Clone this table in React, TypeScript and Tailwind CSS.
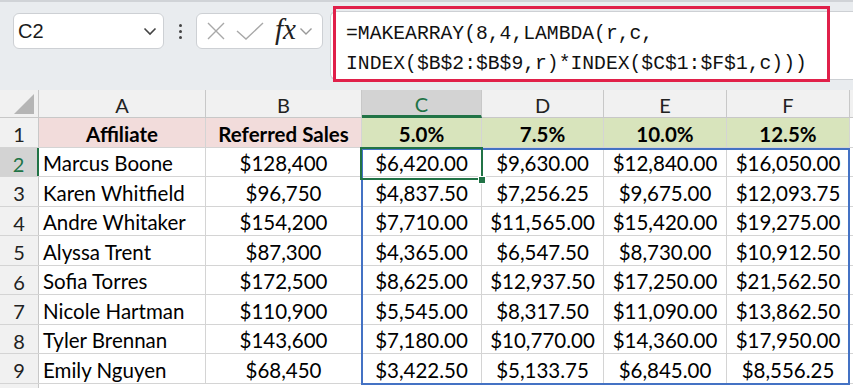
import React from "react";

const cols = [
  { key: "A", w: "w-[167px]" },
  { key: "B", w: "w-[156px]" },
  { key: "C", w: "w-[120px]" },
  { key: "D", w: "w-[122px]" },
  { key: "E", w: "w-[123px]" },
  { key: "F", w: "w-[123px]" },
];

const rows: string[][] = [
  ["Marcus Boone", "$128,400", "$6,420.00", "$9,630.00", "$12,840.00", "$16,050.00"],
  ["Karen Whitfield", "$96,750", "$4,837.50", "$7,256.25", "$9,675.00", "$12,093.75"],
  ["Andre Whitaker", "$154,200", "$7,710.00", "$11,565.00", "$15,420.00", "$19,275.00"],
  ["Alyssa Trent", "$87,300", "$4,365.00", "$6,547.50", "$8,730.00", "$10,912.50"],
  ["Sofia Torres", "$172,500", "$8,625.00", "$12,937.50", "$17,250.00", "$21,562.50"],
  ["Nicole Hartman", "$110,900", "$5,545.00", "$8,317.50", "$11,090.00", "$13,862.50"],
  ["Tyler Brennan", "$143,600", "$7,180.00", "$10,770.00", "$14,360.00", "$17,950.00"],
  ["Emily Nguyen", "$68,450", "$3,422.50", "$5,133.75", "$6,845.00", "$8,556.25"],
];

const rowHeights = ["h-[29px]", "h-[30px]", "h-[29px]", "h-[30px]", "h-[29px]", "h-[30px]", "h-[29px]", "h-[30px]"];

const cellBase = "border-r border-[#d4d4d4] flex items-center pt-[3px] text-[20.5px] whitespace-nowrap";

export default function App() {
  return (
    <div className="w-[853px] h-[388px] overflow-hidden bg-white relative font-['Lato',sans-serif] text-black">
      {/* Top formula area */}
      <div className="h-[90px] bg-[#e9ecef] relative border-t-[2px] border-[#d0d3d7] flex items-start pl-[13px] pt-[11px]">
        {/* Name box */}
        <div className="w-[151px] h-[36px] rounded-[6px] border border-[#cdd0d4] bg-white flex items-center justify-between pl-[4px] pr-[6px]">
          <span className="font-['Liberation_Sans',sans-serif] text-[20px] text-[#1a1a1a]">C2</span>
          <svg width="14" height="9" viewBox="0 0 14 9" fill="none">
            <path d="M1.5 1.5 L7 7 L12.5 1.5" stroke="#444" strokeWidth="1.6" />
          </svg>
        </div>
        {/* dots */}
        <div className="w-[32px] h-[36px] flex flex-col items-center justify-center gap-[3px]">
          <div className="w-[3px] h-[3px] rounded-full bg-[#444]" />
          <div className="w-[3px] h-[3px] rounded-full bg-[#444]" />
          <div className="w-[3px] h-[3px] rounded-full bg-[#444]" />
        </div>
        {/* function buttons */}
        <div className="w-[127px] h-[36px] rounded-[6px] border border-[#cdd0d4] bg-white flex items-center pl-[9px]">
          <svg width="20" height="20" viewBox="0 0 20 20" fill="none">
            <path d="M2 2 L18 18 M18 2 L2 18" stroke="#a8a8a8" strokeWidth="1.4" />
          </svg>
          <svg className="ml-[10px]" width="28" height="20" viewBox="0 0 28 20" fill="none">
            <path d="M1 10 L10 18 L27 2" stroke="#a8a8a8" strokeWidth="1.4" />
          </svg>
          <span className="ml-[11px] mt-[-3px] font-['Liberation_Serif',serif] italic text-[29px] leading-none text-[#222]">fx</span>
          <svg className="ml-[3px]" width="14" height="9" viewBox="0 0 14 9" fill="none">
            <path d="M1.5 1.5 L7 7 L12.5 1.5" stroke="#999" strokeWidth="1.4" />
          </svg>
        </div>
        {/* formula bar */}
        <div className="ml-[7px] mt-[-2px] flex-1 h-[69px] bg-white border border-r-0 border-[#cdd0d4] rounded-l-[6px] relative">
          <div className="absolute left-[2px] top-[-6px] w-[497px] h-[76px] border-[3px] border-[#e0204a] pointer-events-none" />
          <div className="pl-[15px] pt-[7px] font-['Liberation_Mono',monospace] text-[19.7px] leading-[30px] text-[#111]">
            <div>=MAKEARRAY(8,4,LAMBDA(r,c,</div>
            <div>INDEX($B$2:$B$9,r)*INDEX($C$1:$F$1,c)))</div>
          </div>
        </div>
      </div>

      {/* Grid */}
      <div className="relative">
        {/* Column header row */}
        <div className="flex h-[28px] bg-[#f1f1f1] border-b border-[#c8c8c8]">
          <div className="w-[39px] border-r border-[#c8c8c8] relative">
            <svg className="absolute right-[4px] bottom-[3px]" width="20" height="20" viewBox="0 0 20 20">
              <path d="M20 0 L20 20 L0 20 Z" fill="#b5b5b5" />
            </svg>
          </div>
          {cols.map((c) =>
            c.key === "C" ? (
              <div
                key={c.key}
                className={`${c.w} border-r border-[#c8c8c8] bg-[#d3d3d3] text-[#217346] flex items-center justify-center pt-[3px] text-[20px] border-b-[3px] border-b-[#217346] -mb-px`}
              >
                {c.key}
              </div>
            ) : (
              <div key={c.key} className={`${c.w} border-r border-[#c8c8c8] flex items-center justify-center pt-[3px] text-[20px] text-[#222]`}>
                {c.key}
              </div>
            )
          )}
          <div className="flex-1" />
        </div>

        {/* Row 1 */}
        <div className="flex h-[30px] border-b border-[#d4d4d4]">
          <div className="w-[39px] bg-[#f1f1f1] border-r border-[#c8c8c8] flex items-center justify-center pt-[3px] text-[20px] text-[#222]">1</div>
          <div className={`w-[167px] bg-[#f2dcdb] justify-center font-bold ${cellBase}`}>Affiliate</div>
          <div className={`w-[156px] bg-[#f2dcdb] justify-center font-bold ${cellBase}`}>Referred Sales</div>
          <div className={`w-[120px] bg-[#d8e4bc] justify-center font-bold ${cellBase}`}>5.0%</div>
          <div className={`w-[122px] bg-[#d8e4bc] justify-center font-bold ${cellBase}`}>7.5%</div>
          <div className={`w-[123px] bg-[#d8e4bc] justify-center font-bold ${cellBase}`}>10.0%</div>
          <div className={`w-[123px] bg-[#d8e4bc] justify-center font-bold ${cellBase}`}>12.5%</div>
          <div className="flex-1" />
        </div>

        {rows.map((r, i) => (
          <div key={i} className={`flex ${rowHeights[i]} border-b border-[#d4d4d4]`}>
            <div
              className={`w-[39px] flex items-center justify-center pt-[3px] text-[20px] ${
                i === 0
                  ? "bg-[#d3d3d3] text-[#217346] border-r-[2px] border-[#217346]"
                  : "bg-[#f1f1f1] text-[#222] border-r border-[#c8c8c8]"
              }`}
            >
              {i + 2}
            </div>
            <div className={`w-[167px] pl-[4px] ${cellBase}`}>{r[0]}</div>
            <div className={`w-[156px] justify-center ${cellBase}`}>{r[1]}</div>
            <div className={`w-[120px] justify-center ${cellBase}`}>{r[2]}</div>
            <div className={`w-[122px] justify-center ${cellBase}`}>{r[3]}</div>
            <div className={`w-[123px] justify-center ${cellBase}`}>{r[4]}</div>
            <div className={`w-[123px] justify-center ${cellBase}`}>{r[5]}</div>
            <div className="flex-1" />
          </div>
        ))}
        {/* Row 10 partial */}
        <div className="flex h-[30px]">
          <div className="w-[39px] bg-[#f1f1f1] border-r border-[#c8c8c8]" />
          <div className="flex-1" />
        </div>

        {/* Spill range border */}
        <div className="absolute left-[361px] top-[58px] w-[489px] h-[237px] border-2 border-[#4472c4] pointer-events-none" />
        {/* Active cell */}
        <div className="absolute left-[360px] top-[57px] w-[123px] h-[33px] border-[2px] border-[#217346] pointer-events-none" />
        <div className="absolute left-[478px] top-[86px] w-[8px] h-[8px] bg-[#217346] border border-white pointer-events-none" />
      </div>
    </div>
  );
}
